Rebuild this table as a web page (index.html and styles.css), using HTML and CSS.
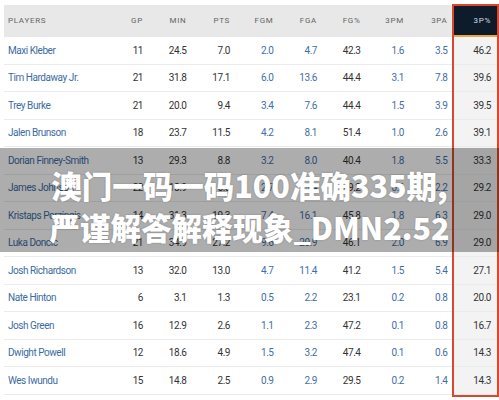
FILE: index.html
```html
<!DOCTYPE html>
<html>
<head>
<meta charset="utf-8">
<link rel="stylesheet" href="styles.css">
</head>
<body>
<div class="page">
  <div class="stats">
    <div class="row head">
      <div class="c name">PLAYERS</div><div class="c">GP</div><div class="c">MIN</div><div class="c">PTS</div><div class="c">FGM</div><div class="c">FGA</div><div class="c">FG%</div><div class="c">3PM</div><div class="c">3PA</div><div class="c hl">3P%</div>
    </div>
    <div class="row"><div class="c name">Maxi Kleber</div><div class="c">11</div><div class="c">24.5</div><div class="c">7.0</div><div class="c lk">2.0</div><div class="c lk">4.7</div><div class="c">42.3</div><div class="c lk">1.6</div><div class="c lk">3.5</div><div class="c hl">46.2</div></div>
    <div class="row"><div class="c name">Tim Hardaway Jr.</div><div class="c">21</div><div class="c">31.8</div><div class="c">17.1</div><div class="c lk">6.0</div><div class="c lk">13.6</div><div class="c">44.4</div><div class="c lk">3.1</div><div class="c lk">7.8</div><div class="c hl">39.6</div></div>
    <div class="row"><div class="c name">Trey Burke</div><div class="c">21</div><div class="c">20.0</div><div class="c">9.4</div><div class="c lk">3.4</div><div class="c lk">7.6</div><div class="c">44.4</div><div class="c lk">1.5</div><div class="c lk">3.9</div><div class="c hl">39.5</div></div>
    <div class="row"><div class="c name">Jalen Brunson</div><div class="c">18</div><div class="c">23.7</div><div class="c">11.5</div><div class="c lk">4.2</div><div class="c lk">8.1</div><div class="c">51.4</div><div class="c lk">1.0</div><div class="c lk">2.6</div><div class="c hl">39.1</div></div>
    <div class="row"><div class="c name">Dorian Finney-Smith</div><div class="c">13</div><div class="c">29.3</div><div class="c">8.8</div><div class="c lk">3.2</div><div class="c lk">8.0</div><div class="c">40.4</div><div class="c lk">1.8</div><div class="c lk">5.5</div><div class="c hl">33.3</div></div>
    <div class="row"><div class="c name">James Johnson</div><div class="c">22</div><div class="c">18.9</div><div class="c">6.5</div><div class="c lk">2.7</div><div class="c lk">5.4</div><div class="c">49.2</div><div class="c lk">0.6</div><div class="c lk">2.2</div><div class="c hl">29.2</div></div>
    <div class="row"><div class="c name">Kristaps Porzingis</div><div class="c">14</div><div class="c">31.3</div><div class="c">19.3</div><div class="c lk">7.4</div><div class="c lk">16.1</div><div class="c">45.8</div><div class="c lk">1.8</div><div class="c lk">6.3</div><div class="c hl">29.0</div></div>
    <div class="row"><div class="c name">Luka Doncic</div><div class="c">21</div><div class="c">34.9</div><div class="c">27.2</div><div class="c lk">9.6</div><div class="c lk">20.9</div><div class="c">46.1</div><div class="c lk">2.0</div><div class="c lk">6.9</div><div class="c hl">29.0</div></div>
    <div class="row"><div class="c name">Josh Richardson</div><div class="c">13</div><div class="c">32.0</div><div class="c">13.0</div><div class="c lk">4.7</div><div class="c lk">11.4</div><div class="c">41.2</div><div class="c lk">1.5</div><div class="c lk">5.4</div><div class="c hl">27.1</div></div>
    <div class="row"><div class="c name">Nate Hinton</div><div class="c">6</div><div class="c">3.1</div><div class="c">1.3</div><div class="c lk">0.5</div><div class="c lk">2.2</div><div class="c">23.1</div><div class="c lk">0.2</div><div class="c lk">0.8</div><div class="c hl">20.0</div></div>
    <div class="row"><div class="c name">Josh Green</div><div class="c">16</div><div class="c">12.9</div><div class="c">2.6</div><div class="c lk">1.1</div><div class="c lk">2.3</div><div class="c">47.2</div><div class="c lk">0.1</div><div class="c lk">0.8</div><div class="c hl">16.7</div></div>
    <div class="row"><div class="c name">Dwight Powell</div><div class="c">12</div><div class="c">18.6</div><div class="c">4.9</div><div class="c lk">1.5</div><div class="c lk">3.2</div><div class="c">47.4</div><div class="c lk">0.1</div><div class="c lk">0.6</div><div class="c hl">14.3</div></div>
    <div class="row"><div class="c name">Wes Iwundu</div><div class="c">15</div><div class="c">14.8</div><div class="c">2.5</div><div class="c lk">0.9</div><div class="c lk">2.9</div><div class="c">29.5</div><div class="c lk">0.2</div><div class="c lk">1.4</div><div class="c hl">14.3</div></div>
  </div>
  <div class="hlbox"></div>
  <div class="banner">
    <div class="banner-line">澳门一码一码100准确335期,</div>
    <div class="banner-line">严谨解答解释现象_DMN2.52</div>
  </div>
</div>
</body>
</html>
```
FILE: styles.css
```css
html, body {
  margin: 0;
  padding: 0;
  background: #ffffff;
}
.page {
  position: relative;
  width: 499px;
  height: 400px;
  overflow: hidden;
  font-family: Roboto, "Noto Sans", sans-serif;
}
.stats {
  padding: 5px 0 0 4px;
}
.row {
  display: grid;
  grid-template-columns: 101.5px repeat(9, 43.5px);
  height: 27.5px;
  box-sizing: border-box;
  border-bottom: 1px solid #ebebeb;
  font-size: 10px;
  letter-spacing: -0.45px;
  color: #333333;
}
.c {
  display: flex;
  align-items: center;
  justify-content: flex-end;
  padding-right: 6px;
}
.c.name {
  justify-content: flex-start;
  padding-left: 4px;
  padding-right: 0;
  color: #3b6ba3;
}
.c.lk {
  color: #3f6ea6;
}
.c.hl {
  background: #f3f3f3;
}
.row.head {
  height: 32px;
  background: #e8e8e8;
  border-bottom: none;
  font-size: 8px;
  letter-spacing: 0.7px;
  color: #666666;
}
.row.head .c {
  padding-bottom: 1px;
}
.row.head .c.name {
  color: #666666;
}
.row.head .c.hl {
  background: #0e1b2b;
  color: #d8dde4;
  border-bottom: 2px solid #e7a449;
  margin-top: 1px;
}
.hlbox {
  position: absolute;
  left: 452px;
  top: 4px;
  width: 47px;
  height: 393px;
  box-sizing: border-box;
  border: 2px solid #d9472e;
}
.banner {
  position: absolute;
  left: 0;
  top: 148px;
  width: 499px;
  height: 104px;
  box-sizing: border-box;
  padding-top: 16px;
  background: rgba(0, 0, 0, 0.32);
  text-align: center;
  color: #ffffff;
  font-family: "Noto Sans CJK SC", "Noto Sans", sans-serif;
  font-weight: 900;
  font-size: 30.5px;
  line-height: 42px;
  text-shadow: 0 0 2px rgba(0, 0, 0, 0.25);
}
.banner-line {
  white-space: nowrap;
}
```
